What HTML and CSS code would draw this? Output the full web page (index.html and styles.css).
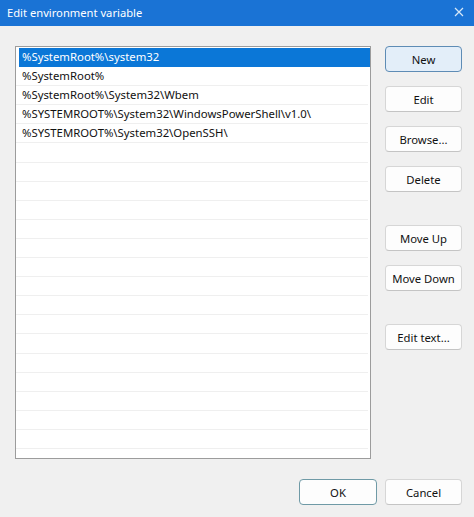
FILE: index.html
```html
<!DOCTYPE html>
<html>
<head>
<meta charset="utf-8">
<link rel="stylesheet" href="styles.css">
</head>
<body>
<div class="window">
  <div class="titlebar">
    <span class="title">Edit environment variable</span>
    <svg class="close" width="10" height="10" viewBox="0 0 10 10"><path d="M1 1 L9 9 M9 1 L1 9" stroke="#d6e8f8" stroke-width="1.2" fill="none"/></svg>
  </div>
  <div class="content">
    <div class="main">
      <div class="list">
        <div class="row selected">%SystemRoot%\system32</div>
        <div class="row">%SystemRoot%</div>
        <div class="row">%SystemRoot%\System32\Wbem</div>
        <div class="row">%SYSTEMROOT%\System32\WindowsPowerShell\v1.0\</div>
        <div class="row">%SYSTEMROOT%\System32\OpenSSH\</div>
        <div class="row"></div><div class="row"></div><div class="row"></div><div class="row"></div><div class="row"></div>
        <div class="row"></div><div class="row"></div><div class="row"></div><div class="row"></div><div class="row"></div>
        <div class="row"></div><div class="row"></div><div class="row"></div><div class="row"></div><div class="row"></div>
        <div class="row"></div><div class="row"></div>
      </div>
      <div class="side">
        <button class="btn default">New</button>
        <button class="btn">Edit</button>
        <button class="btn">Browse...</button>
        <button class="btn">Delete</button>
        <button class="btn spaced">Move Up</button>
        <button class="btn">Move Down</button>
        <button class="btn spaced">Edit text...</button>
      </div>
    </div>
    <div class="footer">
      <button class="btn ok">OK</button>
      <button class="btn">Cancel</button>
    </div>
  </div>
</div>
</body>
</html>
```
FILE: styles.css
```css
html, body {
  margin: 0;
  padding: 0;
  background: #f0f0f0;
}
.window {
  width: 474px;
  height: 517px;
  background: #f0f0f0;
  font-family: "Noto Sans", "Open Sans", sans-serif;
  overflow: hidden;
}
.titlebar {
  height: 26px;
  box-sizing: border-box;
  background: #1a73d5;
  display: flex;
  align-items: center;
  justify-content: space-between;
  padding: 0 10px 2px 7px;
}
.title {
  color: #ffffff;
  font-size: 11.2px;
}
.close {
  display: block;
}
.content {
  padding: 20px 12px 0 15px;
}
.main {
  display: flex;
  gap: 14px;
}
.list {
  width: 354px;
  height: 410px;
  border: 1px solid #9c9c9c;
  background: #ffffff;
  overflow: hidden;
  padding-top: 1px;
  box-sizing: content-box;
}
.row {
  height: 18.1px;
  border-bottom: 1px solid #efefef;
  margin-right: 2px;
  padding-left: 6px;
  font-size: 11.35px;
  line-height: 18px;
  color: #111111;
  white-space: nowrap;
}
.row.selected {
  background: #0b77d7;
  color: #ffffff;
  margin-left: 3px;
  margin-right: 0;
  padding-left: 3px;
  border-bottom-color: #0b77d7;
}
.side {
  display: flex;
  flex-direction: column;
  gap: 14px;
}
.btn {
  width: 77px;
  height: 26px;
  font-family: "Noto Sans", "Open Sans", sans-serif;
  font-size: 11.3px;
  color: #111111;
  background: #fdfdfd;
  border: 1px solid #d6d6d6;
  border-bottom-color: #c4c4c4;
  border-radius: 4px;
  padding: 0;
}
.btn.default {
  background: #e3eef9;
  border: 1px solid #5e8cb5;
}
.btn.spaced {
  margin-top: 19px;
}
.footer {
  display: flex;
  justify-content: flex-end;
  gap: 8px;
  margin-top: 20px;
}
.btn.ok {
  width: 78px;
  border: 1px solid #6f9aa6;
}
```
